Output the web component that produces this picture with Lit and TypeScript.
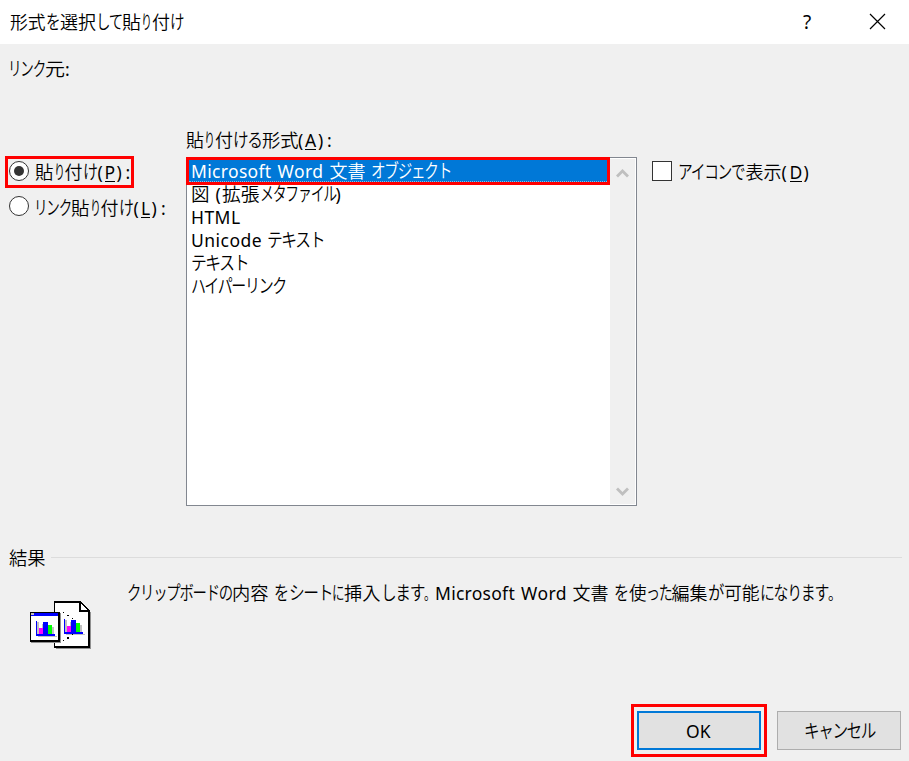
import { LitElement, html, css, svg } from "lit";
import { customElement, property } from "lit/decorators.js";

/** A piece of a label: its text, the width it occupies, and whether it is the access key. */
type Run = [text: string, width: number, key?: boolean];

const KANA = /^[\u3040-\u30ff]+$/;
const LATIN = /^[\x20-\x7e]+$/;

/** A label whose runs are fitted to the proportional widths of a UI font. */
@customElement("ui-label")
class UiLabel extends LitElement {
  static styles = css`
    :host {
      display: block;
      height: 23px;
      line-height: 23px;
      font-family: "Noto Sans", "Noto Sans CJK JP", sans-serif;
      font-size: 18px;
      white-space: pre;
    }
    .line { display: flex; align-items: baseline; height: 23px; }
    .run { flex: none; height: 23px; }
    .glyphs { display: inline-block; line-height: 20px; transform-origin: 0 55%; }
    .cjk { font-family: "Liberation Sans", "Noto Sans CJK JP", sans-serif; font-weight: 350; }
    .kana { letter-spacing: -1.6px; }
    .latin { font-size: 17.5px; }
    .key { border-bottom: 1px solid currentColor; height: 19px; }
  `;

  @property({ attribute: false }) runs: Run[] = [];

  updated() {
    this.renderRoot.querySelectorAll<HTMLElement>(".glyphs").forEach((el, i) => {
      const [text, width] = this.runs[i];
      const natural = el.getBoundingClientRect().width;
      if (!natural) return;
      if (LATIN.test(text)) {
        if (text.length > 2) el.style.letterSpacing = `${(width - natural) / text.length}px`;
      } else {
        el.style.transform = `scale(${width / natural}, ${KANA.test(text) ? 1.06 : 1})`;
      }
    });
  }

  render() {
    return html`<div class="line">${this.runs.map(([t, w, key]) => {
      const kind = LATIN.test(t) ? "latin" : KANA.test(t) && t.length > 1 ? "cjk kana" : "cjk";
      return html`<span class="run" style="width:${w}px"><span class="glyphs ${kind} ${key ? "key" : ""}">${t}</span></span>`;
    })}</div>`;
  }
}

const label = (runs: Run[]) => html`<ui-label .runs=${runs}></ui-label>`;

const TITLE: Run[] = [["形式", 35.5], ["を", 14.5], ["選択", 36], ["して", 26], ["貼", 19], ["り", 11], ["付", 18], ["け", 14.5]];
const SOURCE: Run[] = [["リンク", 37], ["元", 20], [":", 6]];
const FORMATS: Run[] = [["貼", 18], ["り", 11], ["付", 18], ["ける", 28.5], ["形式", 36.5], ["(", 7], ["A", 13, true], [")", 9], [":", 6]];
const PASTE: Run[] = [["貼", 18.5], ["り", 11], ["付", 18], ["け", 15], ["(", 7], ["P", 12, true], [")", 9], [":", 6]];
const PASTE_LINK: Run[] = [["リンク", 37], ["貼", 18.5], ["り", 11], ["付", 18], ["け", 15], ["(", 7.5], ["L", 10.5, true], [")", 9.5], [":", 6]];
const AS_ICON: Run[] = [["アイコン", 53], ["で", 14.5], ["表示", 36], ["(", 8], ["D", 14, true], [")", 7]];
const RESULT: Run[] = [["結果", 36.5]];
const DETAIL: Run[] = [
  ["クリップボードの", 105], ["内容", 36.5], [" ", 5], ["を", 15], ["シート", 43], ["に", 12.5], ["挿入", 36.5],
  ["します", 43], ["。", 11.5], ["Microsoft", 80], [" ", 6], ["Word", 46], [" ", 5.5], ["文書", 36], [" ", 5], ["を", 15],
  ["使", 17.5], ["った", 25.5], ["編集", 36], ["が", 16.5], ["可能", 35.5], ["になります", 68], ["。", 14],
];
const ITEMS: Run[][] = [
  [["Microsoft", 80.5], [" ", 6], ["Word", 46], [" ", 6], ["文書", 36], [" ", 5], ["オブジェクト", 80]],
  [["図", 18.5], [" ", 6], ["(", 6.5], ["拡張", 37.5], ["メタファイル", 76], [")", 6]],
  [["HTML", 49.5]],
  [["Unicode", 71], [" ", 4.5], ["テキスト", 57]],
  [["テキスト", 57]],
  [["ハイパーリンク", 95]],
];

const chart = (x: number, y: number) => svg`
  <g transform="translate(${x} ${y})">
    <path fill="#c0c0c0" d="M1 1h2v12H1zM6 3h1v4H6zM15 6h3v7h-3zM2 15h19v1H2z"/>
    <path fill="#00f" d="M0 0h1v15H0zM0 13h19v2H0zM7 1h5v12H7z"/>
    <path fill="#f0f" d="M3 7h4v6H3z"/>
    <path fill="#0f0" d="M12 4h4v9h-4z"/>
  </g>`;

@customElement("app-root")
class AppRoot extends LitElement {
  static styles = css`
    :host { display: block; }
    * { box-sizing: border-box; }
    .dialog { width: 909px; height: 761px; background: #f0f0f0; color: #000; overflow: hidden; }
    .titlebar { height: 44px; background: #fff; display: flex; align-items: center; padding: 0 23px 1px 10px; }
    .titlebar ui-label { flex: 1; margin-top: 2px; }
    .help { width: 14px; margin-right: 55px; text-align: center; font: 19px/24px "Noto Sans", sans-serif; }
    .close { display: block; width: 17px; height: 17px; }
    .source { padding: 14px 8px 0; height: 84px; }
    .main { display: grid; grid-template-columns: 181px 451px 1fr; height: 377px; padding-left: 5px; }
    .options { padding-top: 28px; }
    .option { display: flex; align-items: flex-start; width: 129px; height: 32px; border: 3px solid transparent; padding: 2px 0 0 1px; gap: 6px; }
    .option.marked { border-color: #f00; }
    .option.second { margin-top: 3px; }
    .option.second ui-label { margin-left: -1px; margin-top: 1px; }
    .radio { flex: none; width: 20px; height: 20px; border: 1.3px solid #333; border-radius: 50%; background: #fff; display: grid; place-items: center; }
    .dot { width: 10px; height: 10px; border-radius: 50%; background: #333; }
    .list { position: relative; display: flex; width: 451px; height: 349px; border: 1px solid #828790; background: #fff; }
    .formats { height: 29px; padding-top: 1px; }
    .items { width: 423px; }
    .item { height: 23px; padding-left: 4px; }
    .item.selected { height: 25px; padding-top: 2px; background: #0078d7; color: #fff; }
    .mark { position: absolute; left: -1px; top: -1px; width: 424px; height: 28px; border: 3px solid #f00; background: linear-gradient(#0078d7, #0078d7) 0 100% / 100% 2px no-repeat; }
    .focus { height: 100%; border-bottom: 1px dotted #8fbde0; }
    .scroll { width: 25px; margin: 1px 0; background: #f0f0f0; display: flex; flex-direction: column; justify-content: space-between; align-items: center; padding: 9px 0 7px; }
    .arrow { display: block; width: 13px; height: 10px; }
    .icon-option { display: flex; gap: 6px; padding: 33px 0 0 15px; }
    .checkbox { width: 20px; height: 20px; border: 1px solid #333; background: #fff; }
    .group { display: flex; align-items: center; padding: 0 7px 0 9px; height: 24px; margin-top: 40px; }
    .group ui-label { margin-top: 3px; }
    .rule { flex: 1; height: 1px; background: #dcdcdc; margin-left: 5px; }
    .outcome { display: flex; height: 135px; padding-left: 30px; }
    .object { display: block; width: 61px; height: 49px; margin: 32px 36px 0 0; }
    .detail { padding-top: 13px; }
    .buttons { display: flex; padding-left: 631px; gap: 10px; }
    .ring { width: 136px; height: 53px; border: 3px solid #f00; padding: 4px 3px; }
    .button { width: 124px; height: 39px; background: #e1e1e1; border: 1px solid #adadad; display: flex; align-items: center; justify-content: center; padding-top: 1px; }
    .button.primary { border: 2px solid #0078d7; }
    .button.cancel { margin-top: 7px; }
  `;

  render() {
    return html`
      <div class="dialog">
        <div class="titlebar">
          ${label(TITLE)}
          <span class="help">?</span>
          <svg class="close" viewBox="0 0 17 17"><path d="M1 1l15 15M16 1L1 16" stroke="#000" stroke-width="1.2" fill="none"/></svg>
        </div>
        <div class="source">${label(SOURCE)}</div>
        <div class="main">
          <div class="options">
            <div class="option marked"><span class="radio"><span class="dot"></span></span>${label(PASTE)}</div>
            <div class="option second"><span class="radio"></span>${label(PASTE_LINK)}</div>
          </div>
          <div>
            <div class="formats">${label(FORMATS)}</div>
            <div class="list">
              <div class="items">
                ${ITEMS.map((runs, i) => html`<div class="item ${i === 0 ? "selected" : ""}">${label(runs)}</div>`)}
              </div>
              <div class="scroll">
                <svg class="arrow" viewBox="0 0 13 10"><path d="M1 8.5l5.5-5.5 5.5 5.5" stroke="#bfbfbf" stroke-width="2.8" fill="none"/></svg>
                <svg class="arrow" viewBox="0 0 13 10"><path d="M1 1.5l5.5 5.5 5.5-5.5" stroke="#bfbfbf" stroke-width="2.8" fill="none"/></svg>
              </div>
              <div class="mark"><div class="focus"></div></div>
            </div>
          </div>
          <div class="icon-option"><span class="checkbox"></span>${label(AS_ICON)}</div>
        </div>
        <div class="group">${label(RESULT)}<span class="rule"></span></div>
        <div class="outcome">
          <svg class="object" viewBox="0 0 61 49" shape-rendering="crispEdges">
            <path fill="#909090" d="M60 11h1v37h-1zM26 47h35v1H26z"/>
            <path fill="#000" d="M24 0h27v1h1v1h1v1h1v1h1v1h1v1h1v1h1v1h1v1h1v38H24z"/>
            <path fill="#fff" d="M25 2h24v9h9v34H25z"/>
            <path fill="#f0f0f0" d="M52 0h9v10h-1V9h-1V8h-1V7h-1V6h-1V5h-1V4h-1V3h-1V2h-1z"/>
            <path fill="#fff" d="M51 3h1v1h1v1h1v1h1v1h1v1h1v1h-6z"/>
            <path fill="#909090" d="M1 41h30v1H1zM30 12h1v30h-1z"/>
            <path fill="#000" d="M0 11h30v30H0z"/>
            <path fill="#fff" d="M1 12h27v27H1z"/>
            <path fill="#00f" d="M1 12h27v3H1z"/>
            <path fill="#c0c0c0" d="M1 12h3v2H1z"/>
            ${chart(6, 20)} ${chart(34, 18)}
            <path fill="#000" d="M33 11h1v1h-1zM37 14h2v1h-2zM42 17h1v1h-1zM42 33h1v1h-1zM37 36h2v2h-2zM33 39h1v1h-1z"/>
          </svg>
          <div class="detail">${label(DETAIL)}</div>
        </div>
        <div class="buttons">
          <div class="ring"><div class="button primary">${label([["OK", 26]])}</div></div>
          <div class="button cancel">${label([["キャンセル", 71]])}</div>
        </div>
      </div>`;
  }
}
